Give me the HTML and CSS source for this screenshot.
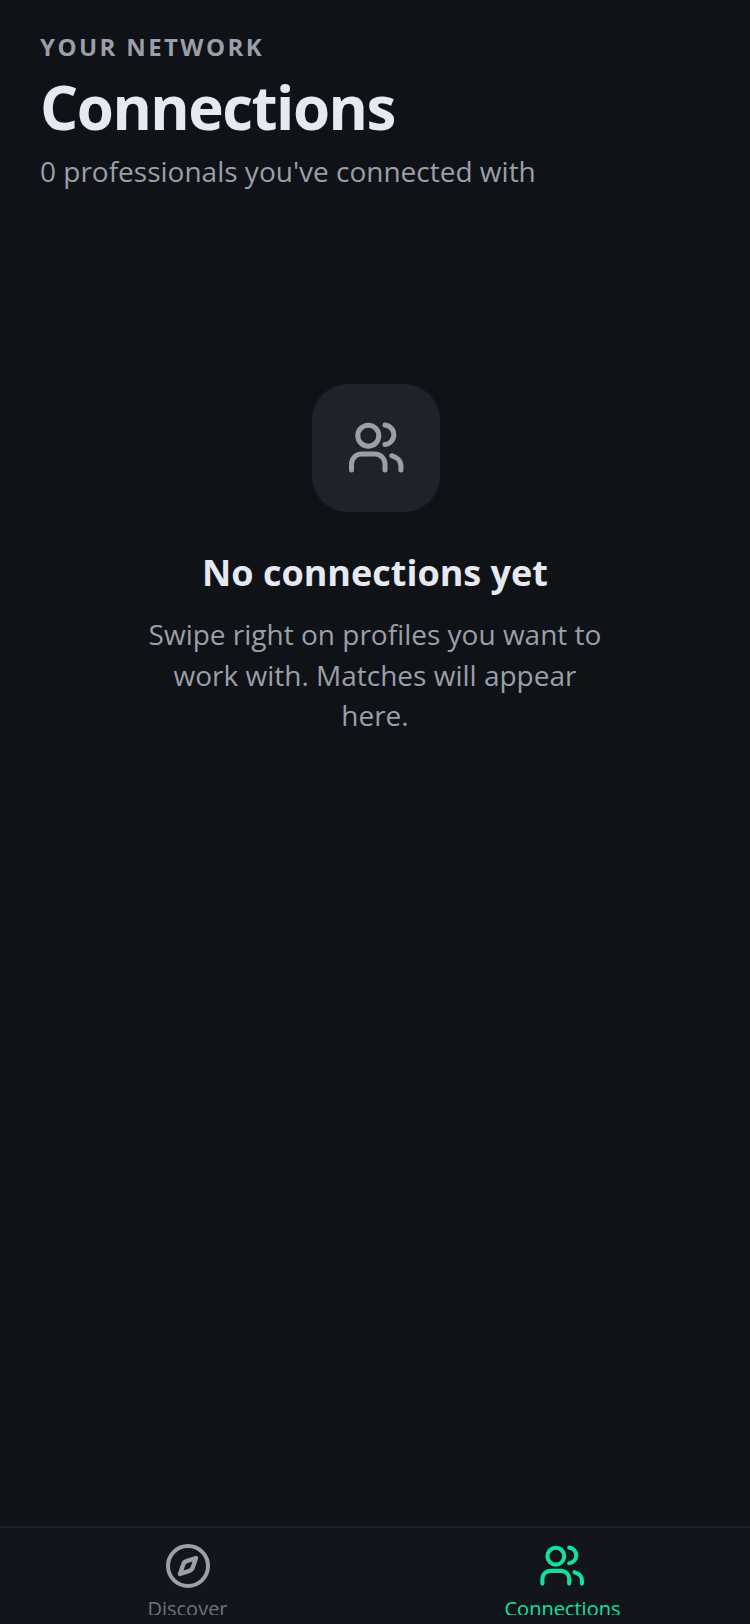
FILE: index.html
```html
<!DOCTYPE html>
<html lang="en">
<head>
<meta charset="utf-8">
<title>Connections</title>
<link rel="stylesheet" href="styles.css">
</head>
<body>
<div class="app">
  <main class="main">
    <header class="header">
      <div class="eyebrow">YOUR NETWORK</div>
      <h1 class="title">Connections</h1>
      <p class="subtitle">0 professionals you've connected with</p>
    </header>
    <section class="empty">
      <div class="empty-icon">
        <svg class="icon-users-lg" viewBox="0 0 60 56" fill="none" stroke="currentColor" stroke-width="5" stroke-linecap="round" stroke-linejoin="round">
          <circle cx="22.3" cy="15.7" r="10.5"/>
          <path d="M5.5 50V44a10 10 0 0 1 10-10H29a10 10 0 0 1 10 10v6"/>
          <path d="M39 5a9.8 9.8 0 0 1 0 19.5"/>
          <path d="M45.7 35.7C51 37 54.9 41 54.9 46v4"/>
        </svg>
      </div>
      <h2 class="empty-title">No connections yet</h2>
      <p class="empty-text">Swipe right on profiles you want to work with. Matches will appear here.</p>
    </section>
  </main>
  <nav class="nav">
    <div class="tab">
      <svg class="tab-icon" viewBox="0 0 24 24" fill="none" stroke="currentColor" stroke-width="2" stroke-linecap="round" stroke-linejoin="round">
        <circle cx="12" cy="12" r="10"/>
        <path d="m16 8-1.6 4.7a2.6 2.6 0 0 1-1.7 1.7L8 16l1.6-4.7a2.6 2.6 0 0 1 1.7-1.7z" stroke-width="2.2"/>
      </svg>
      <span class="tab-label">Discover</span>
    </div>
    <div class="tab tab-active">
      <svg class="tab-icon" viewBox="0 0 60 56" fill="none" stroke="currentColor" stroke-width="5.2" stroke-linecap="round" stroke-linejoin="round">
        <circle cx="22.3" cy="15.7" r="10.5"/>
        <path d="M5.5 50V44a10 10 0 0 1 10-10H29a10 10 0 0 1 10 10v6"/>
        <path d="M39 5a9.8 9.8 0 0 1 0 19.5"/>
        <path d="M45.7 35.7C51 37 54.9 41 54.9 46v4"/>
      </svg>
      <span class="tab-label">Connections</span>
    </div>
  </nav>
</div>
</body>
</html>
```
FILE: styles.css
```css
* { box-sizing: border-box; }
html, body { margin: 0; padding: 0; height: 100%; }
body { background: #0f1217; font-family: "Open Sans", sans-serif; overflow: hidden; }
.app { height: 1624px; display: flex; flex-direction: column; }
.main { flex: 1; min-height: 0; display: flex; flex-direction: column; }
.header { padding: 31px 40px 0; }
.eyebrow { font-size: 24px; line-height: 32px; font-weight: 700; letter-spacing: 2.4px; color: #9b9fa8; }
.title { margin: 10px 0 0; font-size: 60px; line-height: 68px; font-weight: 700; letter-spacing: -1.5px; color: #e6e9ef; }
.subtitle { margin: 10px 0 0; font-size: 28px; line-height: 40px; color: #9b9fa8; }
.empty { display: flex; flex-direction: column; align-items: center; padding-top: 193px; }
.empty-icon { width: 128px; height: 128px; margin-left: 2px; border-radius: 36px; background: #1e222b; color: #9b9fa8; display: flex; align-items: center; justify-content: center; }
.icon-users-lg { width: 60px; height: 56px; }
.empty-title { margin: 36px 0 0; font-size: 36px; line-height: 50px; font-weight: 700; color: #e6e9ef; }
.empty-text { margin: 16px 0 0; width: 460px; font-size: 28px; line-height: 40.6px; text-align: center; color: #9b9fa8; }
.nav { height: 98px; flex: none; border-top: 2px solid #1e222b; background: #12151b; display: flex; }
.tab { flex: 1; height: 87px; padding-top: 14px; overflow: hidden; display: flex; flex-direction: column; align-items: center; color: #6f737c; }
.tab-active { color: #12e09c; }
.tab .tab-icon { flex: none; color: #9b9fa8; }
.tab-active .tab-icon { color: #12e09c; margin-right: 2px; }
.tab-icon { width: 48px; height: 48px; }
.tab-label { margin-top: 5px; font-size: 20px; line-height: 28px; }
```
